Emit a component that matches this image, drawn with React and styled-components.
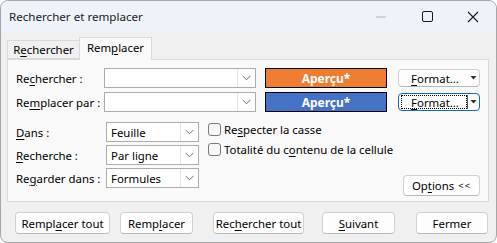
import React from 'react';
import styled, { createGlobalStyle } from 'styled-components';

const Global = createGlobalStyle`
  html, body { margin: 0; padding: 0; background: #ffffff; }
  body { font-family: "Noto Sans", "Open Sans", sans-serif; font-size: 11.4px; color: #000; }
  u { text-underline-offset: 2px; text-decoration-thickness: 1px; }
`;

const Window = styled.div`
  width: 497px;
  height: 243px;
  box-sizing: border-box;
  border: 1px solid #a6a6a6;
  border-radius: 8px;
  overflow: hidden;
  background: #f0f0f0;
  display: flex;
  flex-direction: column;
`;

const TitleBar = styled.div`
  height: 31px;
  flex: none;
  background: #eef3f9;
  display: flex;
  align-items: center;
  padding-left: 8px;
  color: #1a1a1a;
`;

const Title = styled.div`
  flex: 1;
  font-size: 11.6px;
  margin-top: -1px;
`;

const Ctrl = styled.div`
  width: 46px;
  height: 31px;
  display: flex;
  align-items: center;
  justify-content: center;
`;

const Body = styled.div`
  padding: 5px 7px 0 6px;
  display: flex;
  flex-direction: column;
`;

const TabStrip = styled.div`
  display: flex;
  align-items: flex-end;
  height: 22px;
  position: relative;
  z-index: 1;
`;

const Tab = styled.div`
  box-sizing: border-box;
  width: 73px;
  height: ${p => (p.$active ? '23px' : '19px')};
  margin-bottom: ${p => (p.$active ? '-1px' : '0')};
  margin-left: ${p => (p.$active ? '-1px' : '0')};
  border: 1px solid #d9d9d9;
  border-bottom: ${p => (p.$active ? 'none' : '1px solid #d9d9d9')};
  background: ${p => (p.$active ? '#f9f9f9' : '#f0f0f0')};
  display: flex;
  align-items: center;
  justify-content: center;
  padding-bottom: ${p => (p.$active ? '3px' : '0')};
`;

const Panel = styled.div`
  box-sizing: border-box;
  width: 482px;
  height: 143px;
  border: 1px solid #d9d9d9;
  background: #f9f9f9;
  padding: 8px;
  display: flex;
  flex-direction: column;
`;

const Row = styled.div`
  display: flex;
  align-items: center;
  height: 20px;
  margin-top: ${p => p.$mt || 0}px;
`;

const Label = styled.div`
  width: ${p => p.$w}px;
  flex: none;
  white-space: nowrap;
`;

const Combo = styled.div`
  box-sizing: border-box;
  width: ${p => p.$w}px;
  height: 20px;
  flex: none;
  border: 1px solid #acacac;
  background: #ffffff;
  display: flex;
  align-items: stretch;
`;

const ComboText = styled.div`
  flex: 1;
  padding-left: 4px;
  display: flex;
  align-items: center;
`;

const ComboArrow = styled.div`
  width: 17px;
  border-left: 1px solid #e3e3e3;
  display: flex;
  align-items: center;
  justify-content: center;
`;

const Preview = styled.div`
  box-sizing: border-box;
  width: 122px;
  height: 20px;
  margin-left: 9px;
  border: 1px solid #000;
  background: ${p => p.$bg};
  color: #fff;
  font-weight: bold;
  font-size: 12px;
  display: flex;
  align-items: center;
  justify-content: center;
`;

const FormatBtn = styled.div`
  box-sizing: border-box;
  width: 82px;
  height: 18px;
  margin-left: 11px;
  border: 1px solid ${p => (p.$focus ? '#0f6cbd' : '#d0d0d0')};
  border-bottom-color: ${p => (p.$focus ? '#0f6cbd' : '#b8b8b8')};
  border-radius: 4px;
  background: #fdfdfd;
  display: flex;
  align-items: stretch;
  padding: 1px 0 1px 2px;
`;

const FormatLabel = styled.div`
  flex: 1;
  display: flex;
  align-items: center;
  justify-content: center;
  padding-left: 2px;
  white-space: nowrap;
  border: 1px dotted ${p => (p.$focus ? '#000' : 'transparent')};
`;

const FormatArrow = styled.div`
  width: 11px;
  border-left: 1px solid ${p => (p.$focus ? '#555' : 'transparent')};
  display: flex;
  align-items: center;
  justify-content: center;
`;

const Lower = styled.div`
  display: flex;
  margin-top: 10px;
  flex: 1;
`;

const SelCol = styled.div`
  display: flex;
  flex-direction: column;
  gap: 3px;
`;

const CheckCol = styled.div`
  display: flex;
  flex-direction: column;
  margin-left: 9px;
  margin-top: -3px;
`;

const CheckRow = styled.div`
  display: flex;
  align-items: center;
  height: 20px;
  white-space: nowrap;
`;

const Box = styled.div`
  box-sizing: border-box;
  width: 13px;
  height: 13px;
  border: 1px solid #7a7a7a;
  border-radius: 3px;
  background: #f7f7f7;
  margin-right: 3px;
`;

const Right = styled.div`
  margin-left: auto;
  align-self: flex-end;
  margin-bottom: -3px;
`;

const Button = styled.div`
  box-sizing: border-box;
  width: ${p => p.$w}px;
  height: ${p => p.$h || 22}px;
  margin-left: ${p => p.$ml || 0}px;
  border: 1px solid #d0d0d0;
  border-bottom-color: #b9b9b9;
  border-radius: 4px;
  background: #fdfdfd;
  display: flex;
  align-items: center;
  justify-content: center;
  white-space: nowrap;
  flex: none;
`;

const Small = styled.span`
  font-size: 9.5px;
  letter-spacing: 1px;
  margin-left: 4px;
`;

const ButtonRow = styled.div`
  display: flex;
  margin-top: 10px;
  padding-left: 8px;
`;

const Chevron = () => (
  <svg width="9" height="6" viewBox="0 0 9 6">
    <path d="M0.5 0.8 L4.5 4.8 L8.5 0.8" fill="none" stroke="#707070" strokeWidth="1" />
  </svg>
);

const Caret = () => (
  <svg width="7" height="4" viewBox="0 0 7 4">
    <path d="M0.5 0 L6.5 0 L3.5 3.5 Z" fill="#333" />
  </svg>
);

const ComboBox = ({ w, text }) => (
  <Combo $w={w}>
    <ComboText>{text}</ComboText>
    <ComboArrow><Chevron /></ComboArrow>
  </Combo>
);

const Format = ({ focus }) => (
  <FormatBtn $focus={focus}>
    <FormatLabel $focus={focus}><span><u>F</u>ormat...</span></FormatLabel>
    <FormatArrow $focus={focus}><Caret /></FormatArrow>
  </FormatBtn>
);

export default function App() {
  return (
    <>
      <Global />
      <Window>
        <TitleBar>
          <Title>Rechercher et remplacer</Title>
          <Ctrl>
            <svg width="10" height="2" viewBox="0 0 10 2"><path d="M0 1 H10" stroke="#b4b4b4" strokeWidth="1" /></svg>
          </Ctrl>
          <Ctrl>
            <svg width="11" height="11" viewBox="0 0 11 11"><rect x="0.5" y="0.5" width="10" height="10" rx="1.5" fill="none" stroke="#1a1a1a" strokeWidth="1" /></svg>
          </Ctrl>
          <Ctrl>
            <svg width="12" height="12" viewBox="0 0 12 12"><path d="M1 1 L11 11 M11 1 L1 11" stroke="#1a1a1a" strokeWidth="1.1" /></svg>
          </Ctrl>
        </TitleBar>
        <Body>
          <TabStrip>
            <Tab>R<u>e</u>chercher</Tab>
            <Tab $active>Rem<u>p</u>lacer</Tab>
          </TabStrip>
          <Panel>
            <Row>
              <Label $w={88}>Re<u>c</u>hercher :</Label>
              <ComboBox w={152} text="" />
              <Preview $bg="#ed7d31">Aperçu*</Preview>
              <Format />
            </Row>
            <Row $mt={4}>
              <Label $w={88}>Re<u>m</u>placer par :</Label>
              <ComboBox w={152} text="" />
              <Preview $bg="#4472c4">Aperçu*</Preview>
              <Format focus />
            </Row>
            <Lower>
              <SelCol>
                <Row>
                  <Label $w={90}><u>D</u>ans :</Label>
                  <ComboBox w={93} text="Feuille" />
                </Row>
                <Row>
                  <Label $w={90}><u>R</u>echerche :</Label>
                  <ComboBox w={93} text="Par ligne" />
                </Row>
                <Row>
                  <Label $w={90}>Re<u>g</u>arder dans :</Label>
                  <ComboBox w={93} text="Formules" />
                </Row>
              </SelCol>
              <CheckCol>
                <CheckRow><Box />Re<u>s</u>pecter la casse</CheckRow>
                <CheckRow><Box />Totalité du c<u>o</u>ntenu de la cellule</CheckRow>
              </CheckCol>
              <Right>
                <Button $w={77} $h={21}>Op<u>t</u>ions<Small>&lt;&lt;</Small></Button>
              </Right>
            </Lower>
          </Panel>
          <ButtonRow>
            <Button $w={95}>Rempl<u>a</u>cer tout</Button>
            <Button $w={73} $ml={10}>Remp<u>l</u>acer</Button>
            <Button $w={91} $ml={20}>Rec<u>h</u>ercher tout</Button>
            <Button $w={73} $ml={18}><u>S</u>uivant</Button>
            <Button $w={72} $ml={21}>Fermer</Button>
          </ButtonRow>
        </Body>
      </Window>
    </>
  );
}
